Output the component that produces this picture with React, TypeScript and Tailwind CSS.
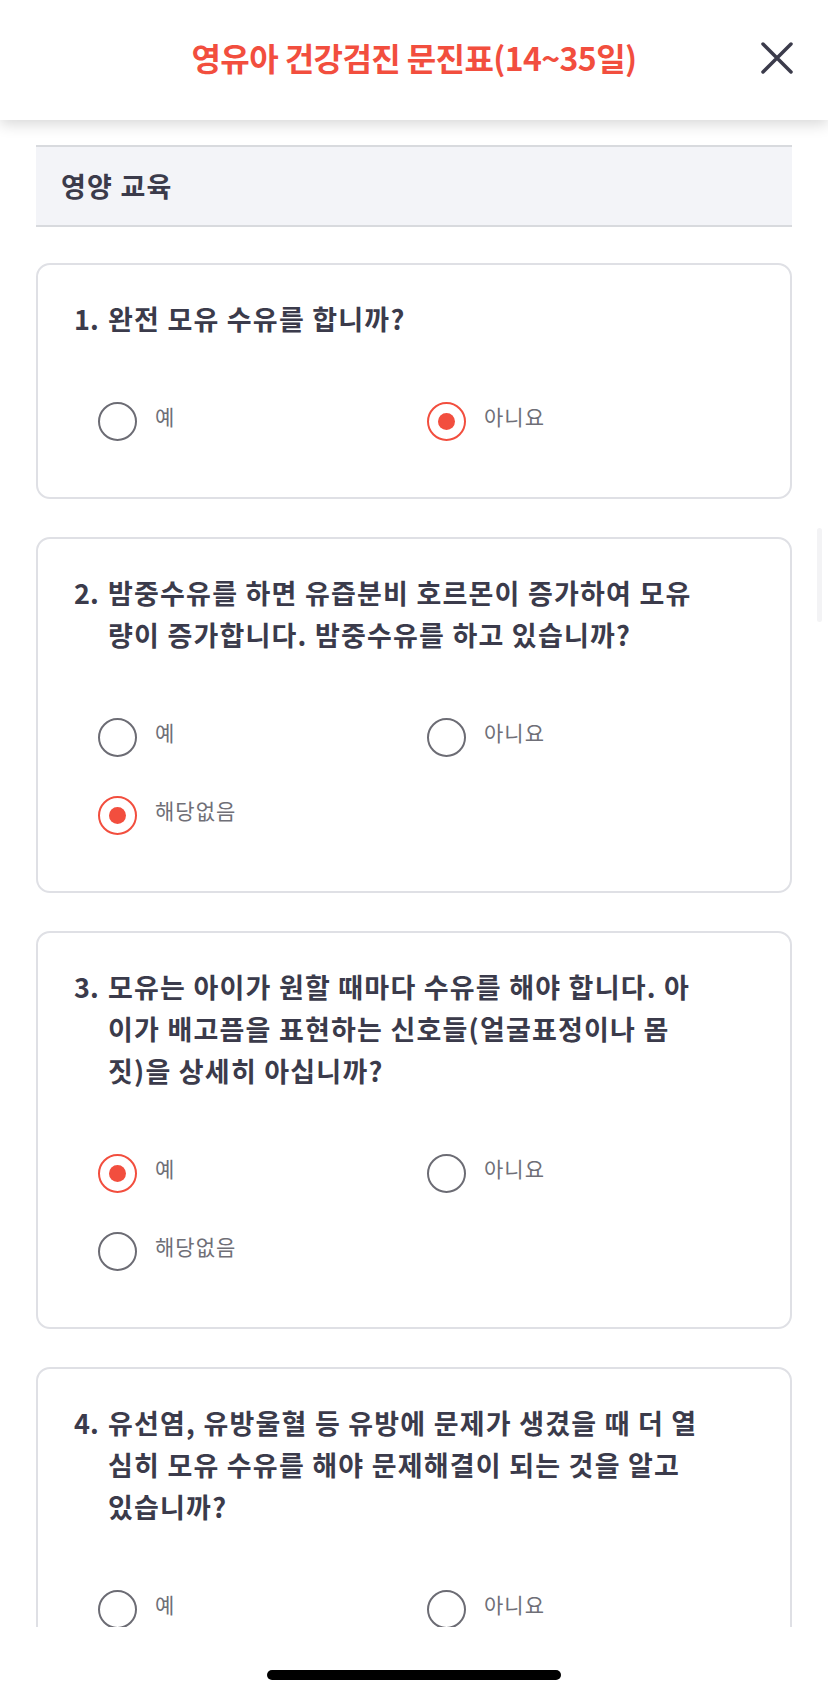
import React from "react";

interface Question {
  no: number;
  lines: string[];
  options: string[];
  selected: string | null;
}

const questions: Question[] = [
  {
    no: 1,
    lines: ["완전 모유 수유를 합니까?"],
    options: ["예", "아니요"],
    selected: "아니요",
  },
  {
    no: 2,
    lines: [
      "밤중수유를 하면 유즙분비 호르몬이 증가하여 모유",
      "량이 증가합니다. 밤중수유를 하고 있습니까?",
    ],
    options: ["예", "아니요", "해당없음"],
    selected: "해당없음",
  },
  {
    no: 3,
    lines: [
      "모유는 아이가 원할 때마다 수유를 해야 합니다. 아",
      "이가 배고픔을 표현하는 신호들(얼굴표정이나 몸",
      "짓)을 상세히 아십니까?",
    ],
    options: ["예", "아니요", "해당없음"],
    selected: "예",
  },
  {
    no: 4,
    lines: [
      "유선염, 유방울혈 등 유방에 문제가 생겼을 때 더 열",
      "심히 모유 수유를 해야 문제해결이 되는 것을 알고",
      "있습니까?",
    ],
    options: ["예", "아니요", "해당없음"],
    selected: null,
  },
];

const Radio: React.FC<{ label: string; checked: boolean }> = ({ label, checked }) => (
  <div className="h-[78px] flex items-center">
    <div className="flex items-start gap-[18px]">
      <span
        className={
          checked
            ? "w-[39px] h-[39px] rounded-full border-2 border-[#f24e3e] flex items-center justify-center"
            : "w-[39px] h-[39px] rounded-full border-2 border-[#6c6c74]"
        }
      >
        {checked && <span className="w-[17px] h-[17px] rounded-full bg-[#f24e3e]" />}
      </span>
      <span className="text-[21px] leading-[28px] text-[#6f6f77] tracking-[1px]">{label}</span>
    </div>
  </div>
);

const QuestionCard: React.FC<{ q: Question }> = ({ q }) => (
  <div className="shrink-0 border-2 border-[#dfe0e5] rounded-[14px] pt-[33px] pb-[37px] pl-[36px] pr-[20px]">
    <div className="flex text-[27px] leading-[42px] font-bold text-[#3b3b4b] tracking-[1.2px]">
      <span className="w-[34px] shrink-0 tracking-normal">{q.no}.</span>
      <div className="flex flex-col">
        {q.lines.map((line) => (
          <span key={line} className="whitespace-nowrap">
            {line}
          </span>
        ))}
      </div>
    </div>
    <div className="mt-[42px] ml-[24px] grid grid-cols-[329px_1fr]">
      {q.options.map((opt) => (
        <Radio key={opt} label={opt} checked={q.selected === opt} />
      ))}
    </div>
  </div>
);

export default function App() {
  return (
    <div className="relative w-[828px] h-[1696px] bg-white overflow-hidden flex flex-col font-['Noto_Sans_CJK_KR','Noto_Sans',sans-serif]">
      <header className="relative z-10 h-[120px] shrink-0 bg-white flex items-center justify-center shadow-[0_4px_14px_rgba(0,0,0,0.16)]">
        <h1 className="-mt-[6px] text-[32px] font-bold text-[#f24e3e] tracking-[-0.6px]">
          영유아 건강검진 문진표(14~35일)
        </h1>
        <button className="absolute right-[34px] top-[41px] w-[34px] h-[34px] flex items-center justify-center">
          <svg width="32" height="32" viewBox="0 0 32 32" fill="none">
            <path d="M2 2L30 30M30 2L2 30" stroke="#3b3b4b" strokeWidth="3.5" strokeLinecap="round" />
          </svg>
        </button>
      </header>

      <main className="h-[1507px] shrink-0 overflow-hidden px-[36px] pt-[25px] flex flex-col">
        <div className="shrink-0 h-[82px] bg-[#f3f4f8] border-y-2 border-[#d8dade] flex items-center px-[25px]">
          <span className="text-[27px] font-bold text-[#3b3b4b] tracking-[1.2px]">영양 교육</span>
        </div>
        <div className="mt-[36px] flex flex-col gap-[38px]">
          {questions.map((q) => (
            <QuestionCard key={q.no} q={q} />
          ))}
        </div>
      </main>

      <div className="flex-1 flex justify-center pt-[43px] bg-white">
        <div className="w-[294px] h-[10px] rounded-full bg-black" />
      </div>

      <div className="absolute left-[817px] top-[528px] w-[5px] h-[94px] rounded-full bg-[#f3f3f5]" />
    </div>
  );
}
